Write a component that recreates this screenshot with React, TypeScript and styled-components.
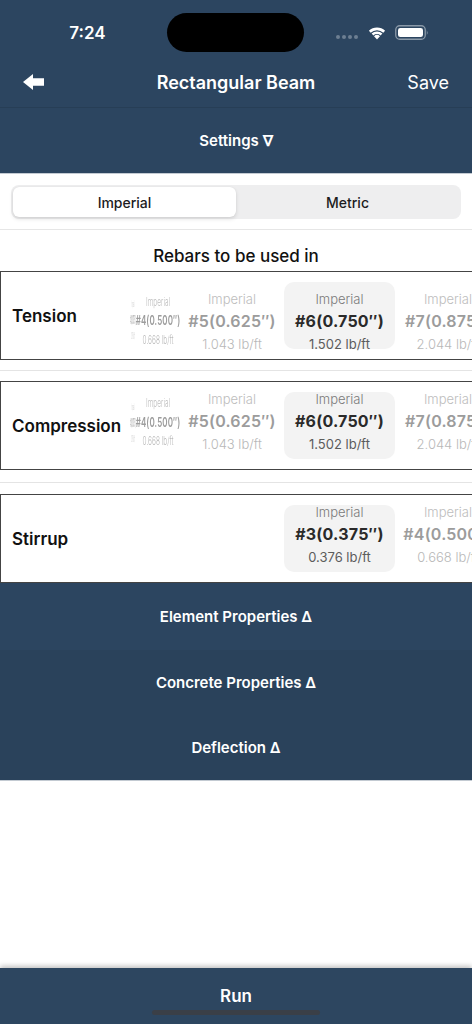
import styled, { createGlobalStyle } from "styled-components";

const GlobalStyle = createGlobalStyle`
  html, body {
    margin: 0;
    padding: 0;
    background: #ffffff;
    overflow: hidden;
  }
  body {
    font-family: Inter, "Noto Sans", "Liberation Sans", sans-serif;
    -webkit-font-smoothing: antialiased;
  }
`;

type Rebar = { size: string; weight: string };
type Row = {
  label: string;
  left: Rebar[];
  selected: Rebar;
  right: Rebar[];
  shift: number;
  below: [number, number];
};

const bar = (size: string, weight: string): Rebar => ({ size, weight });

const rows: Row[] = [
  {
    label: "Tension",
    left: [bar("#3(0.375″)", "0.376 lb/ft"), bar("#4(0.500″)", "0.668 lb/ft"), bar("#5(0.625″)", "1.043 lb/ft")],
    selected: bar("#6(0.750″)", "1.502 lb/ft"),
    right: [bar("#7(0.875″)", "2.044 lb/ft")],
    shift: 6,
    below: [10, 10],
  },
  {
    label: "Compression",
    left: [bar("#3(0.375″)", "0.376 lb/ft"), bar("#4(0.500″)", "0.668 lb/ft"), bar("#5(0.625″)", "1.043 lb/ft")],
    selected: bar("#6(0.750″)", "1.502 lb/ft"),
    right: [bar("#7(0.875″)", "2.044 lb/ft")],
    shift: -4,
    below: [12, 11],
  },
  {
    label: "Stirrup",
    left: [],
    selected: bar("#3(0.375″)", "0.376 lb/ft"),
    right: [bar("#4(0.500″)", "0.668 lb/ft")],
    shift: -4,
    below: [0, 0],
  },
];

const sections = ["Element Properties Δ", "Concrete Properties Δ", "Deflection Δ"];

// how the wheel squeezes items as they turn away from the middle
const squeeze = [
  { width: 10, sx: 0.06, sy: 0.7 },
  { width: 40, sx: 0.5, sy: 0.85 },
  { width: 108, sx: 1, sy: 1 },
];

function Rebar({ r, on, shift }: { r: Rebar; on?: boolean; shift: number }) {
  return (
    <Lines style={{ transform: `translateY(${shift}px)` }}>
      <Unit $on={on}>Imperial</Unit>
      <Size $on={on}>{r.size}</Size>
      <Weight $on={on}>{r.weight}</Weight>
    </Lines>
  );
}

export default function App() {
  return (
    <Screen>
      <GlobalStyle />
      <Header>
        <StatusBar>
          <Clock>7:24</Clock>
          <Island />
          <StatusIcons>
            <svg width="24" height="6" viewBox="0 0 24 6">
              {[3, 9, 15, 21].map((x) => (
                <circle key={x} cx={x} cy="3" r="2" fill="#6d7f92" />
              ))}
            </svg>
            <svg width="20" height="15" viewBox="0 0 20 15">
              <path d="M10 14.5 L7 11.2 A4.5 4.5 0 0 1 13 11.2 Z" fill="#fff" />
              <path d="M4.6 8.6 A7.8 7.8 0 0 1 15.4 8.6 L13.6 10.5 A5.2 5.2 0 0 0 6.4 10.5 Z" fill="#fff" />
              <path d="M1.9 5.8 A11.6 11.6 0 0 1 18.1 5.8 L16.3 7.7 A9 9 0 0 0 3.7 7.7 Z" fill="#fff" />
            </svg>
            <svg width="34" height="15" viewBox="0 0 34 15">
              <rect x="0.75" y="0.75" width="29.5" height="13.5" rx="4" fill="none" stroke="#8a99a8" strokeWidth="1.3" />
              <rect x="3" y="3" width="25" height="9" rx="2.3" fill="#fff" />
              <path d="M31.8 5 Q33.4 7.5 31.8 10 Z" fill="#8a99a8" />
            </svg>
          </StatusIcons>
        </StatusBar>
        <NavBar>
          <BackButton aria-label="back">
            <svg width="21" height="16" viewBox="0 0 21 16">
              <path d="M0 8 L10 0 L10 4.2 L21 4.2 L21 11.8 L10 11.8 L10 16 Z" fill="#fff" />
            </svg>
          </BackButton>
          <NavTitle>Rectangular Beam</NavTitle>
          <SaveButton>Save</SaveButton>
        </NavBar>
      </Header>

      <SectionBar $tone="settings">Settings ∇</SectionBar>

      <SegmentWrap>
        <Segmented>
          <Segment $active>Imperial</Segment>
          <Segment>Metric</Segment>
        </Segmented>
      </SegmentWrap>

      <Heading>Rebars to be used in</Heading>

      {rows.map((row, i) => (
        <RowBlock key={row.label} $pad={row.below[0]} $gap={row.below[1]} $last={i === rows.length - 1}>
          <Card>
            <CardLabel>{row.label}</CardLabel>
            <Wheel>
              <LeftGroup>
                {row.left.map((r, k) => {
                  const s = squeeze[squeeze.length - row.left.length + k];
                  return (
                    <Item key={r.size} style={{ width: s.width }}>
                      <ItemInner $squeezed={s.sx < 1} style={{ transform: `scale(${s.sx}, ${s.sy})` }}>
                        <Rebar r={r} shift={row.shift} />
                      </ItemInner>
                    </Item>
                  );
                })}
              </LeftGroup>
              <Picked>
                <Rebar r={row.selected} on shift={row.shift} />
              </Picked>
              {row.right.map((r) => (
                <Item key={r.size}>
                  <ItemInner>
                    <Rebar r={r} shift={row.shift} />
                  </ItemInner>
                </Item>
              ))}
            </Wheel>
          </Card>
        </RowBlock>
      ))}

      {sections.map((s, i) => (
        <SectionBar key={s} $tone={i === 0 ? "a" : "b"} $last={i === sections.length - 1}>
          {s}
        </SectionBar>
      ))}

      <Spacer />

      <RunBar>
        Run
        <HomeIndicator />
      </RunBar>
    </Screen>
  );
}

const Screen = styled.div`
  width: 472px;
  height: 1024px;
  display: flex;
  flex-direction: column;
  background: #ffffff;
  overflow: hidden;
`;

const Header = styled.div`
  background: #2c4560;
  border-bottom: 1px solid #273e56;
`;

const StatusBar = styled.div`
  height: 58px;
  display: grid;
  grid-template-columns: 167px 137px 1fr;
  align-items: center;
`;

const Clock = styled.div`
  color: #ffffff;
  font-size: 17px;
  font-weight: 600;
  text-align: center;
  padding-left: 8px;
  margin-top: 8px;
`;

const Island = styled.div`
  height: 39px;
  margin-top: 7px;
  border-radius: 20px;
  background: #000000;
`;

const StatusIcons = styled.div`
  display: flex;
  align-items: center;
  gap: 8px;
  padding-left: 31px;
  margin-top: 7px;

  svg:first-child {
    margin-top: 8px;
  }
`;

const NavBar = styled.div`
  height: 48px;
  display: flex;
  align-items: center;
  justify-content: space-between;
  padding: 0 23px 1px 23px;
  position: relative;
`;

const BackButton = styled.button`
  background: none;
  border: none;
  padding: 0;
  display: flex;
  cursor: pointer;
`;

const NavTitle = styled.div`
  position: absolute;
  left: 0;
  right: 0;
  text-align: center;
  color: #ffffff;
  font-size: 18px;
  font-weight: 600;
  pointer-events: none;
`;

const SaveButton = styled.button`
  background: none;
  border: none;
  padding: 0;
  color: #ffffff;
  font-family: inherit;
  font-size: 18px;
  font-weight: 400;
`;

const SectionBar = styled.div<{ $tone: "settings" | "a" | "b"; $last?: boolean }>`
  height: ${(p) => (p.$tone === "a" ? "67px" : "65px")};
  flex-shrink: 0;
  display: flex;
  align-items: center;
  justify-content: center;
  background: ${(p) => (p.$tone === "b" ? "#2a425b" : "#2c4560")};
  color: #ffffff;
  font-size: 15px;
  font-weight: 600;
  border-bottom: ${(p) => (p.$tone === "settings" || p.$last ? "1px solid #c3cad2" : "none")};
`;

const SegmentWrap = styled.div`
  padding: 11px 11px 10px;
  border-bottom: 1px solid #e6e6e6;
`;

const Segmented = styled.div`
  height: 34px;
  display: grid;
  grid-template-columns: 1fr 1fr;
  padding: 2px;
  box-sizing: border-box;
  border-radius: 8px;
  background: #eeeeef;
`;

const Segment = styled.div<{ $active?: boolean }>`
  display: flex;
  align-items: center;
  justify-content: center;
  border-radius: 6px;
  font-size: 14px;
  font-weight: 500;
  color: #1c1c1e;
  background: ${(p) => (p.$active ? "#ffffff" : "transparent")};
  box-shadow: ${(p) => (p.$active ? "0 2px 4px rgba(0,0,0,0.12), 0 0 1px rgba(0,0,0,0.1)" : "none")};
`;

const Heading = styled.div`
  padding: 16px 0 5px;
  text-align: center;
  font-size: 17px;
  font-weight: 500;
  color: #111111;
`;

const RowBlock = styled.div<{ $pad: number; $gap: number; $last?: boolean }>`
  padding-bottom: ${(p) => p.$pad}px;
  margin-bottom: ${(p) => p.$gap}px;
  border-bottom: ${(p) => (p.$last ? "none" : "1px solid #e4e4e4")};
`;

const Card = styled.div`
  height: 89px;
  box-sizing: border-box;
  width: 473px;
  display: flex;
  align-items: center;
  border: 1px solid #444444;
  border-left-width: 1.5px;
  border-right: none;
  overflow: hidden;
`;

const CardLabel = styled.div`
  width: 127px;
  flex-shrink: 0;
  box-sizing: border-box;
  padding-left: 11px;
  font-size: 17px;
  font-weight: 600;
  color: #111111;
  white-space: nowrap;
`;

const Wheel = styled.div`
  display: flex;
  align-items: center;
  height: 100%;
`;

const LeftGroup = styled.div`
  width: 158px;
  flex-shrink: 0;
  display: flex;
  justify-content: flex-end;
`;

const Item = styled.div`
  width: 108px;
  flex-shrink: 0;
  display: flex;
  justify-content: center;
`;

const ItemInner = styled.div<{ $squeezed?: boolean }>`
  width: 108px;
  flex-shrink: 0;
  display: flex;
  justify-content: center;
  filter: ${(p) => (p.$squeezed ? "grayscale(1)" : "none")};
`;

const Lines = styled.div`
  display: flex;
  flex-direction: column;
  align-items: center;
`;

const Picked = styled.div`
  width: 111px;
  height: 67px;
  flex-shrink: 0;
  margin: 0 -1px 0 -2px;
  display: flex;
  flex-direction: column;
  align-items: center;
  justify-content: center;
  border-radius: 10px;
  background: #f3f3f3;
`;

const Unit = styled.div<{ $on?: boolean }>`
  line-height: 22px;
  font-size: 13px;
  font-weight: 300;
  color: ${(p) => (p.$on ? "#7a7a7a" : "#bdbdbd")};
  white-space: nowrap;
`;

const Size = styled.div<{ $on?: boolean }>`
  line-height: 23px;
  font-size: 16px;
  font-weight: ${(p) => (p.$on ? 700 : 600)};
  color: ${(p) => (p.$on ? "#2a2a2a" : "#9c9c9c")};
  white-space: nowrap;
  letter-spacing: 0.2px;
`;

const Weight = styled.div<{ $on?: boolean }>`
  line-height: 22px;
  font-size: 13px;
  font-weight: ${(p) => (p.$on ? 400 : 300)};
  color: ${(p) => (p.$on ? "#5c5c5c" : "#b8b8b8")};
  white-space: nowrap;
`;

const Spacer = styled.div`
  flex: 1;
`;

const RunBar = styled.div`
  height: 56px;
  flex-shrink: 0;
  position: relative;
  display: flex;
  align-items: center;
  justify-content: center;
  background: #2d4660;
  color: #ffffff;
  font-size: 17px;
  font-weight: 600;
  box-shadow: 0 -2px 5px rgba(0, 0, 0, 0.25);
`;

const HomeIndicator = styled.div`
  position: absolute;
  left: 152px;
  bottom: 9px;
  width: 168px;
  height: 5px;
  border-radius: 3px;
  background: #3a3f47;
`;
